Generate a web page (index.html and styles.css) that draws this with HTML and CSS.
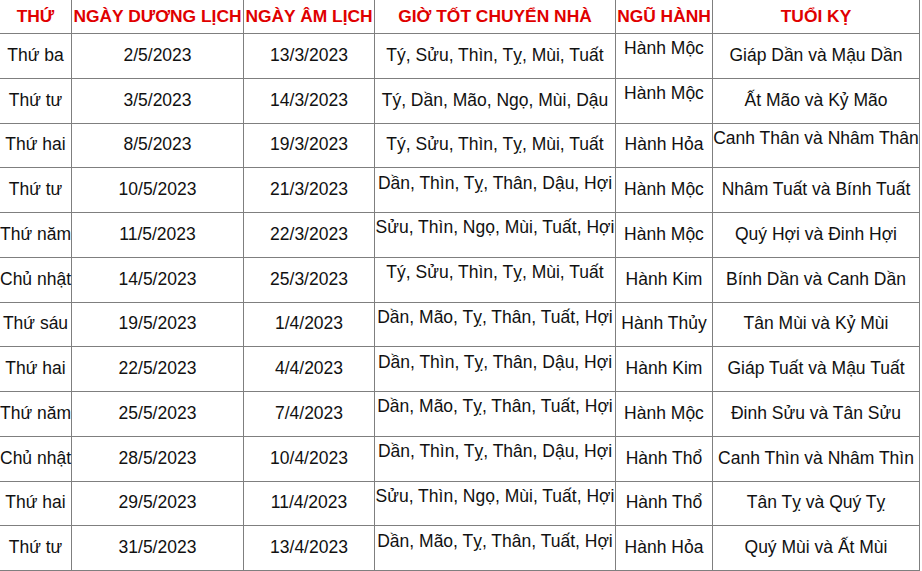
FILE: index.html
```html
<!DOCTYPE html>
<html lang="vi">
<head>
<meta charset="utf-8">
<title>Ngày tốt chuyển nhà tháng 5/2023</title>
<link rel="stylesheet" href="styles.css">
</head>
<body>
<table class="days">
  <colgroup>
    <col class="c1"><col class="c2"><col class="c3"><col class="c4"><col class="c5"><col class="c6">
  </colgroup>
  <thead>
    <tr class="head">
      <th>THỨ</th><th>NGÀY DƯƠNG LỊCH</th><th>NGÀY ÂM LỊCH</th><th>GIỜ TỐT CHUYỂN NHÀ</th><th>NGŨ HÀNH</th><th>TUỔI KỴ</th>
    </tr>
  </thead>
  <tbody>
    <tr><td>Thứ ba</td><td>2/5/2023</td><td>13/3/2023</td><td>Tý, Sửu, Thìn, Tỵ, Mùi, Tuất</td><td class="up">Hành Mộc</td><td>Giáp Dần và Mậu Dần</td></tr>
    <tr><td>Thứ tư</td><td>3/5/2023</td><td>14/3/2023</td><td>Tý, Dần, Mão, Ngọ, Mùi, Dậu</td><td class="up">Hành Mộc</td><td>Ất Mão và Kỷ Mão</td></tr>
    <tr><td>Thứ hai</td><td>8/5/2023</td><td>19/3/2023</td><td>Tý, Sửu, Thìn, Tỵ, Mùi, Tuất</td><td>Hành Hỏa</td><td class="up">Canh Thân và Nhâm Thân</td></tr>
    <tr><td>Thứ tư</td><td>10/5/2023</td><td>21/3/2023</td><td class="up">Dần, Thìn, Tỵ, Thân, Dậu, Hợi</td><td>Hành Mộc</td><td>Nhâm Tuất và Bính Tuất</td></tr>
    <tr><td>Thứ năm</td><td>11/5/2023</td><td>22/3/2023</td><td class="up">Sửu, Thìn, Ngọ, Mùi, Tuất, Hợi</td><td>Hành Mộc</td><td>Quý Hợi và Đinh Hợi</td></tr>
    <tr><td>Chủ nhật</td><td>14/5/2023</td><td>25/3/2023</td><td class="up">Tý, Sửu, Thìn, Tỵ, Mùi, Tuất</td><td>Hành Kim</td><td>Bính Dần và Canh Dần</td></tr>
    <tr><td>Thứ sáu</td><td>19/5/2023</td><td>1/4/2023</td><td class="up">Dần, Mão, Tỵ, Thân, Tuất, Hợi</td><td>Hành Thủy</td><td>Tân Mùi và Kỷ Mùi</td></tr>
    <tr><td>Thứ hai</td><td>22/5/2023</td><td>4/4/2023</td><td class="up">Dần, Thìn, Tỵ, Thân, Dậu, Hợi</td><td>Hành Kim</td><td>Giáp Tuất và Mậu Tuất</td></tr>
    <tr><td>Thứ năm</td><td>25/5/2023</td><td>7/4/2023</td><td class="up">Dần, Mão, Tỵ, Thân, Tuất, Hợi</td><td>Hành Mộc</td><td>Đinh Sửu và Tân Sửu</td></tr>
    <tr><td>Chủ nhật</td><td>28/5/2023</td><td>10/4/2023</td><td class="up">Dần, Thìn, Tỵ, Thân, Dậu, Hợi</td><td>Hành Thổ</td><td>Canh Thìn và Nhâm Thìn</td></tr>
    <tr><td>Thứ hai</td><td>29/5/2023</td><td>11/4/2023</td><td class="up">Sửu, Thìn, Ngọ, Mùi, Tuất, Hợi</td><td>Hành Thổ</td><td>Tân Tỵ và Quý Tỵ</td></tr>
    <tr><td>Thứ tư</td><td>31/5/2023</td><td>13/4/2023</td><td class="up">Dần, Mão, Tỵ, Thân, Tuất, Hợi</td><td>Hành Hỏa</td><td>Quý Mùi và Ất Mùi</td></tr>
  </tbody>
</table>
</body>
</html>
```
FILE: styles.css
```css
html, body {
  margin: 0;
  padding: 0;
  background: #ffffff;
}
body {
  font-family: "Liberation Sans", Arial, sans-serif;
  font-size: 17.5px;
  color: #111111;
  overflow: hidden;
}
.days {
  border-collapse: collapse;
  table-layout: fixed;
  width: 921px;
  margin: -1px 0 0 -1px;
}
.c1 { width: 72px; }
.c2 { width: 172px; }
.c3 { width: 131px; }
.c4 { width: 241px; }
.c5 { width: 97px; }
.c6 { width: 207px; }
.days th,
.days td {
  border: 1px solid #7f7f7f;
  padding: 0 0 2px 0;
  text-align: center;
  vertical-align: middle;
  white-space: nowrap;
  overflow: visible;
  line-height: 20px;
}
.head { height: 34px; }
.days th {
  color: #e00000;
  font-weight: bold;
  font-size: 17.4px;
  padding-bottom: 1px;
}
.days tbody tr { height: 44.75px; }
.days td.up { padding-bottom: 15px; }
```
